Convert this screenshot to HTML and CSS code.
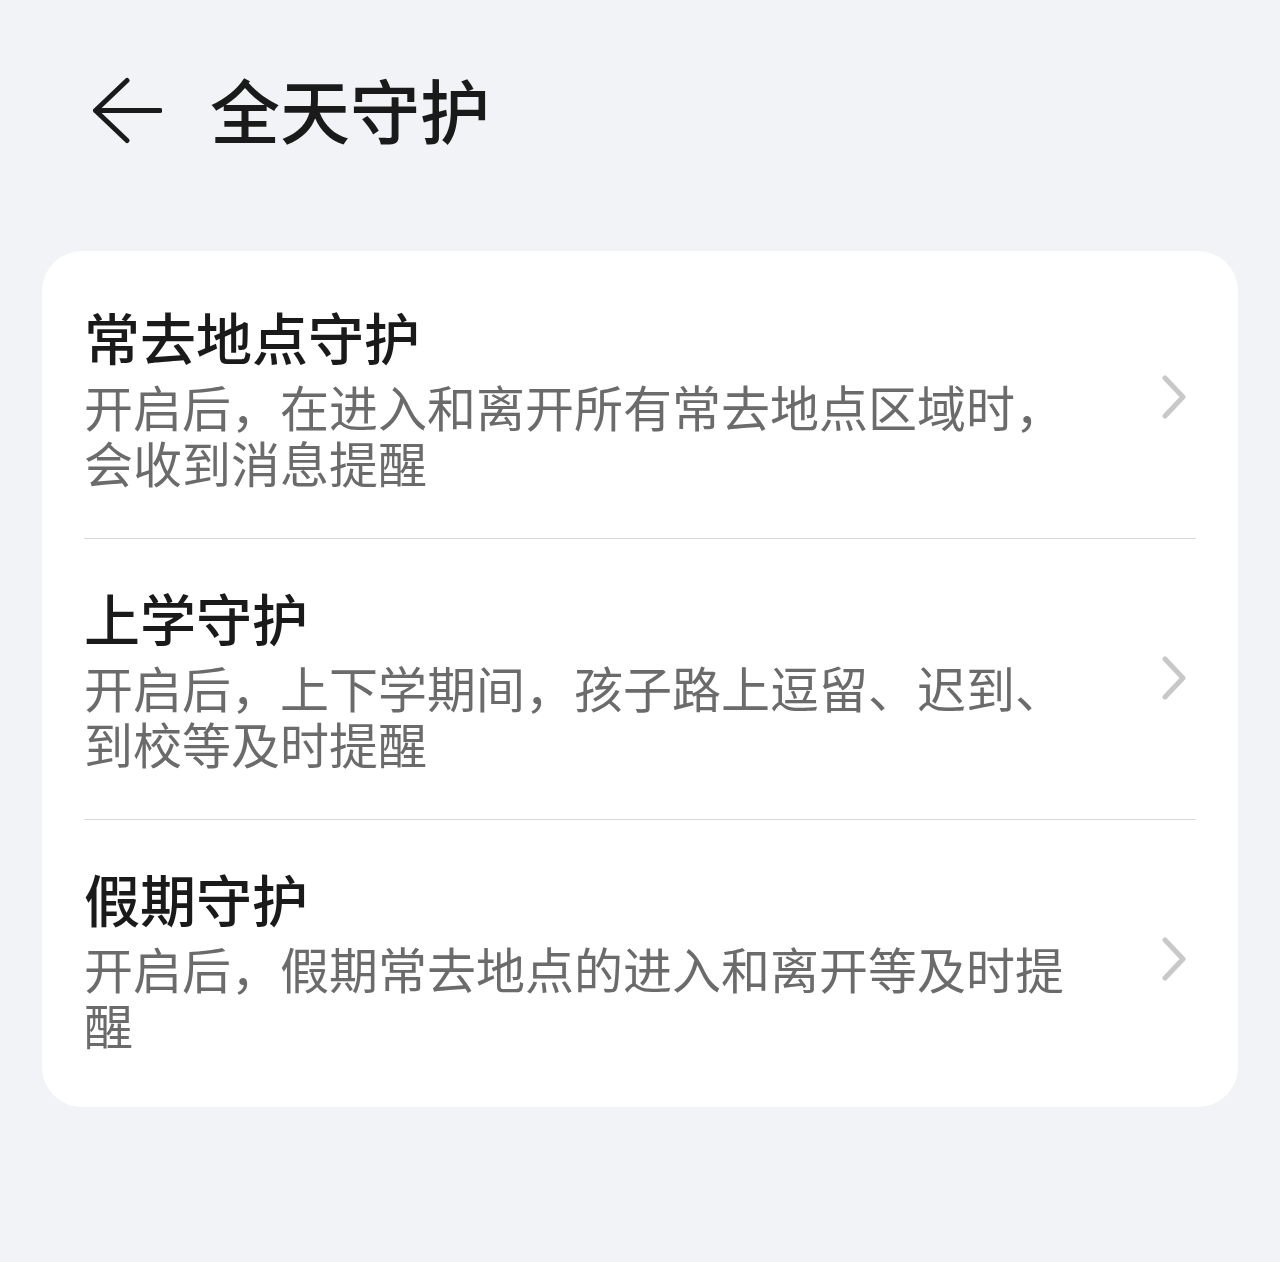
FILE: index.html
```html
<!DOCTYPE html>
<html lang="zh-CN">
<head>
  <meta charset="UTF-8">
  <meta name="viewport" content="width=device-width, initial-scale=1.0">
  <title>全天守护</title>
  <link rel="stylesheet" href="styles.css">
</head>
<body>
  <!-- Header -->
  <header class="top-bar">
    <svg class="back-icon" width="70" height="67" viewBox="0 0 70 67">
      <path d="M35 3.5 L3.5 33.5 L35 63.5 M3.5 33.5 L68 33.5" />
    </svg>
    <h1 class="page-title">全天守护</h1>
  </header>

  <!-- Settings list -->
  <div class="card">
    <div class="item">
      <div class="item-text">
        <div class="item-title">常去地点守护</div>
        <div class="item-desc">开启后，在进入和离开所有常去地点区域时，会收到消息提醒</div>
      </div>
      <svg class="chevron" width="24" height="44" viewBox="0 0 24 44">
        <path d="M3 3 L21 22 L3 41" />
      </svg>
    </div>
    <div class="item">
      <div class="item-text">
        <div class="item-title">上学守护</div>
        <div class="item-desc">开启后，上下学期间，孩子路上逗留、迟到、到校等及时提醒</div>
      </div>
      <svg class="chevron" width="24" height="44" viewBox="0 0 24 44">
        <path d="M3 3 L21 22 L3 41" />
      </svg>
    </div>
    <div class="item">
      <div class="item-text">
        <div class="item-title">假期守护</div>
        <div class="item-desc">开启后，假期常去地点的进入和离开等及时提醒</div>
      </div>
      <svg class="chevron" width="24" height="44" viewBox="0 0 24 44">
        <path d="M3 3 L21 22 L3 41" />
      </svg>
    </div>
  </div>
</body>
</html>
```

FILE: styles.css
```css
/* General */
body {
  margin: 0;
  padding: 0 42px;
  background: #f1f3f6;
  font-family: "Noto Sans CJK SC", "Noto Sans", sans-serif;
  color: #1a1a1a;
}

/* Header */
.top-bar {
  display: flex;
  align-items: center;
  height: 96px;
  padding: 61px 0 0 50px;
  margin-bottom: 94px;
}

.back-icon {
  fill: none;
  stroke: #1a1a1a;
  stroke-width: 5;
  stroke-linecap: round;
  stroke-linejoin: round;
  margin-right: 48px;
  margin-top: 3px;
}

.page-title {
  margin: 0;
  font-size: 70px;
  font-weight: 500;
  line-height: 96px;
}

/* Card */
.card {
  background: #fff;
  border-radius: 40px;
  padding: 7px 0;
}

.item {
  display: flex;
  align-items: center;
  gap: 78px;
  margin: 0 42px;
  padding: 42px 10px 48px 0;
  border-bottom: 1px solid #d9d9d9;
}

.item:last-child {
  border-bottom: none;
}

.item-text {
  flex: 1;
}

.item-title {
  font-size: 56px;
  font-weight: 500;
  line-height: 72px;
  margin-bottom: 6px;
}

.item-desc {
  font-size: 49px;
  line-height: 56px;
  color: #6b6b6b;
}

.chevron {
  flex-shrink: 0;
  fill: none;
  stroke: #c8c8c8;
  stroke-width: 5;
  stroke-linecap: round;
  stroke-linejoin: round;
  margin-top: 3px;
}
```
